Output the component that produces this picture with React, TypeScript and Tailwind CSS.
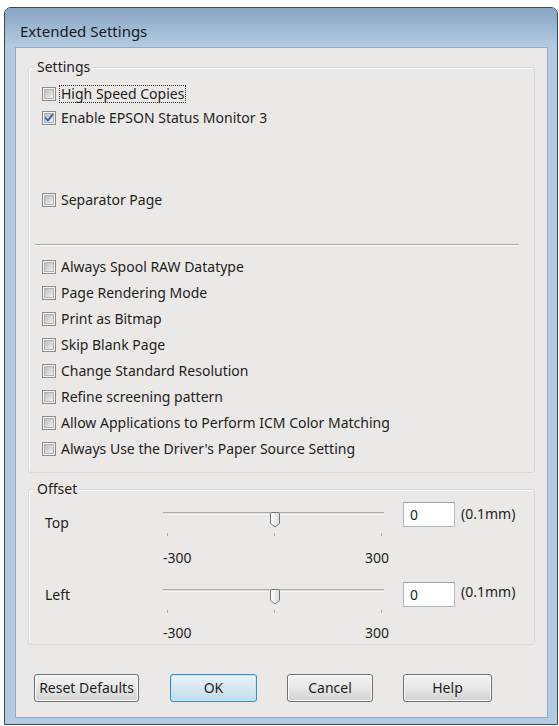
import React from "react";

const settingsTop = ["High Speed Copies", "Enable EPSON Status Monitor 3"];

const settingsBottom = [
  "Always Spool RAW Datatype",
  "Page Rendering Mode",
  "Print as Bitmap",
  "Skip Blank Page",
  "Change Standard Resolution",
  "Refine screening pattern",
  "Allow Applications to Perform ICM Color Matching",
  "Always Use the Driver's Paper Source Setting",
];

function CheckBox({ checked }: { checked?: boolean }) {
  return (
    <span className="w-[14px] h-[14px] shrink-0 border border-[#8a8c8e] bg-[#f2f2f2] p-[1px]">
      <span className="relative block w-full h-full bg-linear-to-br from-[#bdbdbd] via-[#d6d6d6] to-[#f1f1f1] border border-[#b0b3b7]">
        {checked && (
          <svg viewBox="0 0 10 10" className="absolute -left-[1px] -top-[1px] w-[10px] h-[10px]">
            <path d="M1.6 5 L3.9 7.6 L8.4 1.6" fill="none" stroke="#3f60a8" strokeWidth="1.8" strokeLinecap="round" strokeLinejoin="round" />
          </svg>
        )}
      </span>
    </span>
  );
}

function CheckRow({ label, checked, focused, h }: { label: string; checked?: boolean; focused?: boolean; h: string }) {
  return (
    <div className={`flex items-center pl-[13px] gap-[5px] ${h}`}>
      <CheckBox checked={checked} />
      {focused ? (
        <span className="-ml-[2px] border border-dotted border-[#2a2a2a] px-[1px] leading-[16px]">{label}</span>
      ) : (
        <span className="leading-[20px]">{label}</span>
      )}
    </div>
  );
}

function GroupBox({ title, className, children }: { title: string; className: string; children: React.ReactNode }) {
  return (
    <div className={`relative ml-[12px] w-[507px] border border-[#d3dbe1] rounded-[3px] shadow-[inset_1px_1px_0_#fbfbfb] ${className}`}>
      <span className="absolute -top-[11px] left-[6px] px-[2px] bg-[#ebe9e7] leading-[20px]">{title}</span>
      {children}
    </div>
  );
}

function Thumb() {
  return (
    <svg viewBox="0 0 10 16" className="absolute left-[107px] top-0 w-[10px] h-[16px]">
      <defs>
        <linearGradient id="thumbFill" x1="0" y1="0" x2="1" y2="0">
          <stop offset="0" stopColor="#ffffff" />
          <stop offset="1" stopColor="#d9d9d9" />
        </linearGradient>
      </defs>
      <path d="M1.8 0.5 H8.2 A1.3 1.3 0 0 1 9.5 1.8 V11.5 L5 15 L0.5 11.5 V1.8 A1.3 1.3 0 0 1 1.8 0.5 Z" fill="url(#thumbFill)" stroke="#72767b" strokeWidth="1" />
    </svg>
  );
}

function SliderRow({ label, labelTop, inputTop, unitTop, valuesGap }: { label: string; labelTop: string; inputTop: string; unitTop: string; valuesGap: string }) {
  return (
    <div className="flex items-start">
      <div className={`w-[134px] pl-[16px] leading-[20px] ${labelTop}`}>{label}</div>
      <div className="w-[226px] pt-[8px]">
        <div className="relative h-[16px]">
          <div className="mt-[5px] w-[221px] h-[3px] border-t border-[#acacac] border-b border-b-[#f7f7f7] bg-[#dedede]" />
          <Thumb />
        </div>
        <div className="mt-[5px] flex justify-between pl-[4px] pr-[7px] h-[3px]">
          <span className="w-[1px] h-[3px] bg-[#a9a9a9]" />
          <span className="w-[1px] h-[3px] bg-[#a9a9a9]" />
          <span className="w-[1px] h-[3px] bg-[#a9a9a9]" />
        </div>
        <div className={`flex justify-between leading-[20px] ${valuesGap}`}>
          <span>-300</span>
          <span>300</span>
        </div>
      </div>
      <div className={`ml-[14px] w-[52px] h-[25px] border border-[#b5b8bf] border-t-[#a2a5ab] bg-white pl-[6px] leading-[23px] ${inputTop}`}>0</div>
      <div className={`ml-[6px] leading-[20px] ${unitTop}`}>(0.1mm)</div>
    </div>
  );
}

function Button({ label, w, ml, primary }: { label: string; w: string; ml: string; primary?: boolean }) {
  return (
    <button
      className={`h-[28px] rounded-[3px] border leading-[24px] ${w} ${ml} ${
        primary
          ? "border-[#3c8cbf] bg-linear-to-b from-[#eaf4fa] via-[#d6e7f2] to-[#c3dbea] shadow-[inset_0_0_0_1px_#c6e4f5]"
          : "border-[#707070] bg-linear-to-b from-[#f3f3f3] via-[#e7e7e7] to-[#d2d2d2] shadow-[inset_0_0_0_1px_#fafafa]"
      }`}
    >
      {label}
    </button>
  );
}

export default function App() {
  return (
    <div className="w-[559px] h-[726px] overflow-hidden bg-white pt-[7px] pl-[4px] font-['Noto_Sans','Open_Sans',sans-serif] text-[14px] text-[#1e1e1e]">
      <div className="w-[554px] h-[718px] flex flex-col border border-[#3d4752] rounded-t-[7px] bg-[#b2cbe1]">
        <div className="h-[39px] shrink-0 rounded-t-[6px] bg-linear-to-b from-[#88a5c3] to-[#b3cce2] pl-[15px] pt-[13px]">
          <span className="text-[15px] leading-[20px] text-[#1a1a1a]">Extended Settings</span>
        </div>
        <div className="h-[671px] ml-[10px] mr-[9px] border border-[#93abc3] bg-[#ebe9e7]">
          <GroupBox title="Settings" className="mt-[19px] pt-[14px] pb-[10px]">
            <CheckRow label={settingsTop[0]} focused h="h-[24px]" />
            <CheckRow label={settingsTop[1]} checked h="h-[24px]" />
            <div className="mt-[58px]">
              <CheckRow label="Separator Page" h="h-[24px]" />
            </div>
            <div className="mt-[32px] ml-[6px] mr-[15px] border-t border-[#a9a9a9] border-b border-b-white" />
            <div className="mt-[8px]">
              {settingsBottom.map((s) => (
                <CheckRow key={s} label={s} h="h-[26px]" />
              ))}
            </div>
          </GroupBox>
          <GroupBox title="Offset" className="mt-[16px] pt-[9px] h-[156px]">
            <div className="h-[77px]">
              <SliderRow label="Top" labelTop="mt-[14px]" inputTop="mt-[3px]" unitTop="mt-[5px]" valuesGap="mt-[12px]" />
            </div>
            <SliderRow label="Left" labelTop="mt-[9px]" inputTop="mt-[6px]" unitTop="mt-[6px]" valuesGap="mt-[10px]" />
          </GroupBox>
          <div className="mt-[29px] flex">
            <Button label="Reset Defaults" w="w-[105px]" ml="ml-[18px]" />
            <Button label="OK" w="w-[87px]" ml="ml-[31px]" primary />
            <Button label="Cancel" w="w-[86px]" ml="ml-[30px]" />
            <Button label="Help" w="w-[89px]" ml="ml-[30px]" />
          </div>
        </div>
      </div>
    </div>
  );
}
